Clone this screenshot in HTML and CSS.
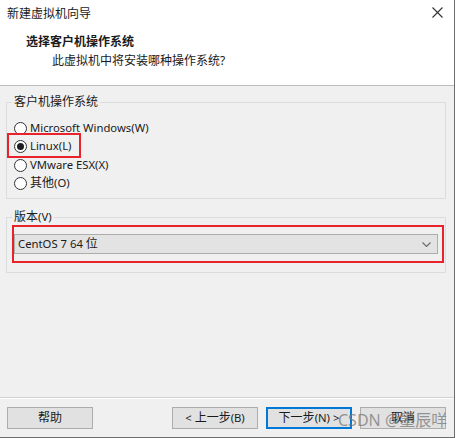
FILE: index.html
```html
<!DOCTYPE html>
<html lang="zh-CN">
<head>
<meta charset="utf-8">
<link rel="stylesheet" href="styles.css">
</head>
<body>
<div class="window">
  <div class="header">
    <div class="titlebar">
      <span class="title">新建虚拟机向导</span>
      <svg class="close" width="11" height="11" viewBox="0 0 11 11"><path d="M0.5 0.5 L10.5 10.5 M10.5 0.5 L0.5 10.5" stroke="#333" stroke-width="1.1" fill="none"/></svg>
    </div>
    <div class="heading">选择客户机操作系统</div>
    <div class="sub">此虚拟机中将安装哪种操作系统?</div>
  </div>
  <div class="content">
    <div class="group g1">
      <div class="legend">客户机操作系统</div>
      <div class="radios">
        <div class="radio"><span class="dot"></span><span class="lbl lat">Microsoft Windows(W)</span></div>
        <div class="radio"><span class="mark"><span class="dot on"></span><span class="lbl lat">Linux(L)</span></span></div>
        <div class="radio"><span class="dot"></span><span class="lbl lat">VMware ESX(X)</span></div>
        <div class="radio"><span class="dot"></span><span class="lbl">其他<span class="lat">(O)</span></span></div>
      </div>
    </div>
    <div class="group g2">
      <div class="legend">版本<span class="lat">(V)</span></div>
      <div class="redbox">
        <div class="combo">
          <span class="combo-text"><span class="lat">CentOS 7 64 </span>位</span>
          <svg class="chev" width="9" height="5" viewBox="0 0 9 5"><path d="M0.5 0.5 L4.5 4.5 L8.5 0.5" stroke="#6a6a6a" stroke-width="1.1" fill="none"/></svg>
        </div>
      </div>
    </div>
  </div>
  <div class="footer">
    <button class="btn">帮助</button>
    <div class="right-btns">
      <button class="btn"><span class="lat">&lt; </span>上一步<span class="lat">(B)</span></button>
      <button class="btn primary">下一步<span class="lat">(N) &gt;</span></button>
      <button class="btn">取消</button>
    </div>
  </div>
  <div class="watermark">CSDN @墨辰咩</div>
</div>
</body>
</html>
```
FILE: styles.css
```css
* { box-sizing: border-box; }
html, body { margin: 0; padding: 0; }
body {
  width: 456px;
  height: 438px;
  background: #ffffff;
  font-family: "Noto Sans", "Noto Sans CJK SC", sans-serif;
  font-size: 12px;
  color: #1a1a1a;
  overflow: hidden;
}
.lat { font-size: 11.3px; }
.window {
  position: relative;
  width: 455px;
  height: 438px;
  background: #f0f0f0;
  border-right: 1px solid #6e6e6e;
  border-bottom: 1px solid #6e6e6e;
  display: flex;
  flex-direction: column;
}
.header {
  height: 86px;
  background: #ffffff;
  border-bottom: 1px solid #bdbdbd;
  flex: none;
}
.titlebar {
  height: 28px;
  display: flex;
  align-items: center;
  justify-content: space-between;
  padding: 0 11px 1px 7px;
}
.title { line-height: 16px; }
.close { display: block; margin-bottom: 2px; }
.heading {
  margin-top: 5px;
  padding-left: 26px;
  font-weight: bold;
  line-height: 18px;
}
.sub {
  margin-top: 1px;
  padding-left: 52px;
  line-height: 18px;
}
.content {
  flex: 1;
  padding-top: 16px;
}
.group {
  margin-left: 6px;
  width: 440px;
  border: 1px solid #dcdcdc;
}
.legend {
  display: table;
  margin: -9px 0 0 5px;
  padding: 0 2px;
  line-height: 16px;
  height: 16px;
  background: #f0f0f0;
}
.g1 { height: 97px; }
.radios { padding-top: 9px; padding-left: 7px; }
.radio {
  height: 18px;
  display: flex;
  align-items: center;
}
.radio:nth-child(3) { margin-top: 1px; }
.mark {
  position: relative;
  display: flex;
  align-items: center;
}
.mark::after {
  content: "";
  position: absolute;
  left: -7px;
  top: -5px;
  right: -10px;
  bottom: -4px;
  border: 2px solid #e8232b;
}
.dot {
  width: 13px;
  height: 13px;
  border: 1px solid #333333;
  border-radius: 50%;
  background: #ffffff;
  display: flex;
  align-items: center;
  justify-content: center;
  flex: none;
}
.dot.on::before {
  content: "";
  width: 7px;
  height: 7px;
  border-radius: 50%;
  background: #1e1e1e;
}
.lbl { margin-left: 3px; line-height: 16px; }
.g2 { margin-top: 18px; height: 56px; }
.redbox {
  margin: 0 1px 0 5px;
  border: 2px solid #e8232b;
  padding: 7px 4px 7px 0;
}
.combo {
  height: 20px;
  background: #e3e3e3;
  border: 1px solid #adadad;
  display: flex;
  align-items: center;
  justify-content: space-between;
  padding: 0 6px 0 3px;
}
.combo-text { line-height: 16px; }
.chev { display: block; }
.footer {
  flex: none;
  height: 40px;
  border-top: 1px solid #d0d0d0;
  box-shadow: inset 0 1px 0 #ffffff;
  padding: 9px 8px 0 7px;
  display: flex;
  justify-content: space-between;
  align-items: flex-start;
}
.right-btns { display: flex; gap: 8px; }
.btn {
  width: 86px;
  height: 22px;
  background: #e1e1e1;
  border: 1px solid #adadad;
  font-family: "Noto Sans", "Noto Sans CJK SC", sans-serif;
  font-size: 12px;
  color: #1a1a1a;
  padding: 0;
  line-height: 18px;
}
.btn.primary { border: 2px solid #0078d7; }
.watermark {
  position: absolute;
  left: 338px;
  top: 410px;
  font-family: "Noto Sans", "Noto Sans CJK SC", sans-serif;
  font-size: 16px;
  line-height: 20px;
  color: rgba(120, 120, 120, 0.75);
  white-space: nowrap;
}
```
